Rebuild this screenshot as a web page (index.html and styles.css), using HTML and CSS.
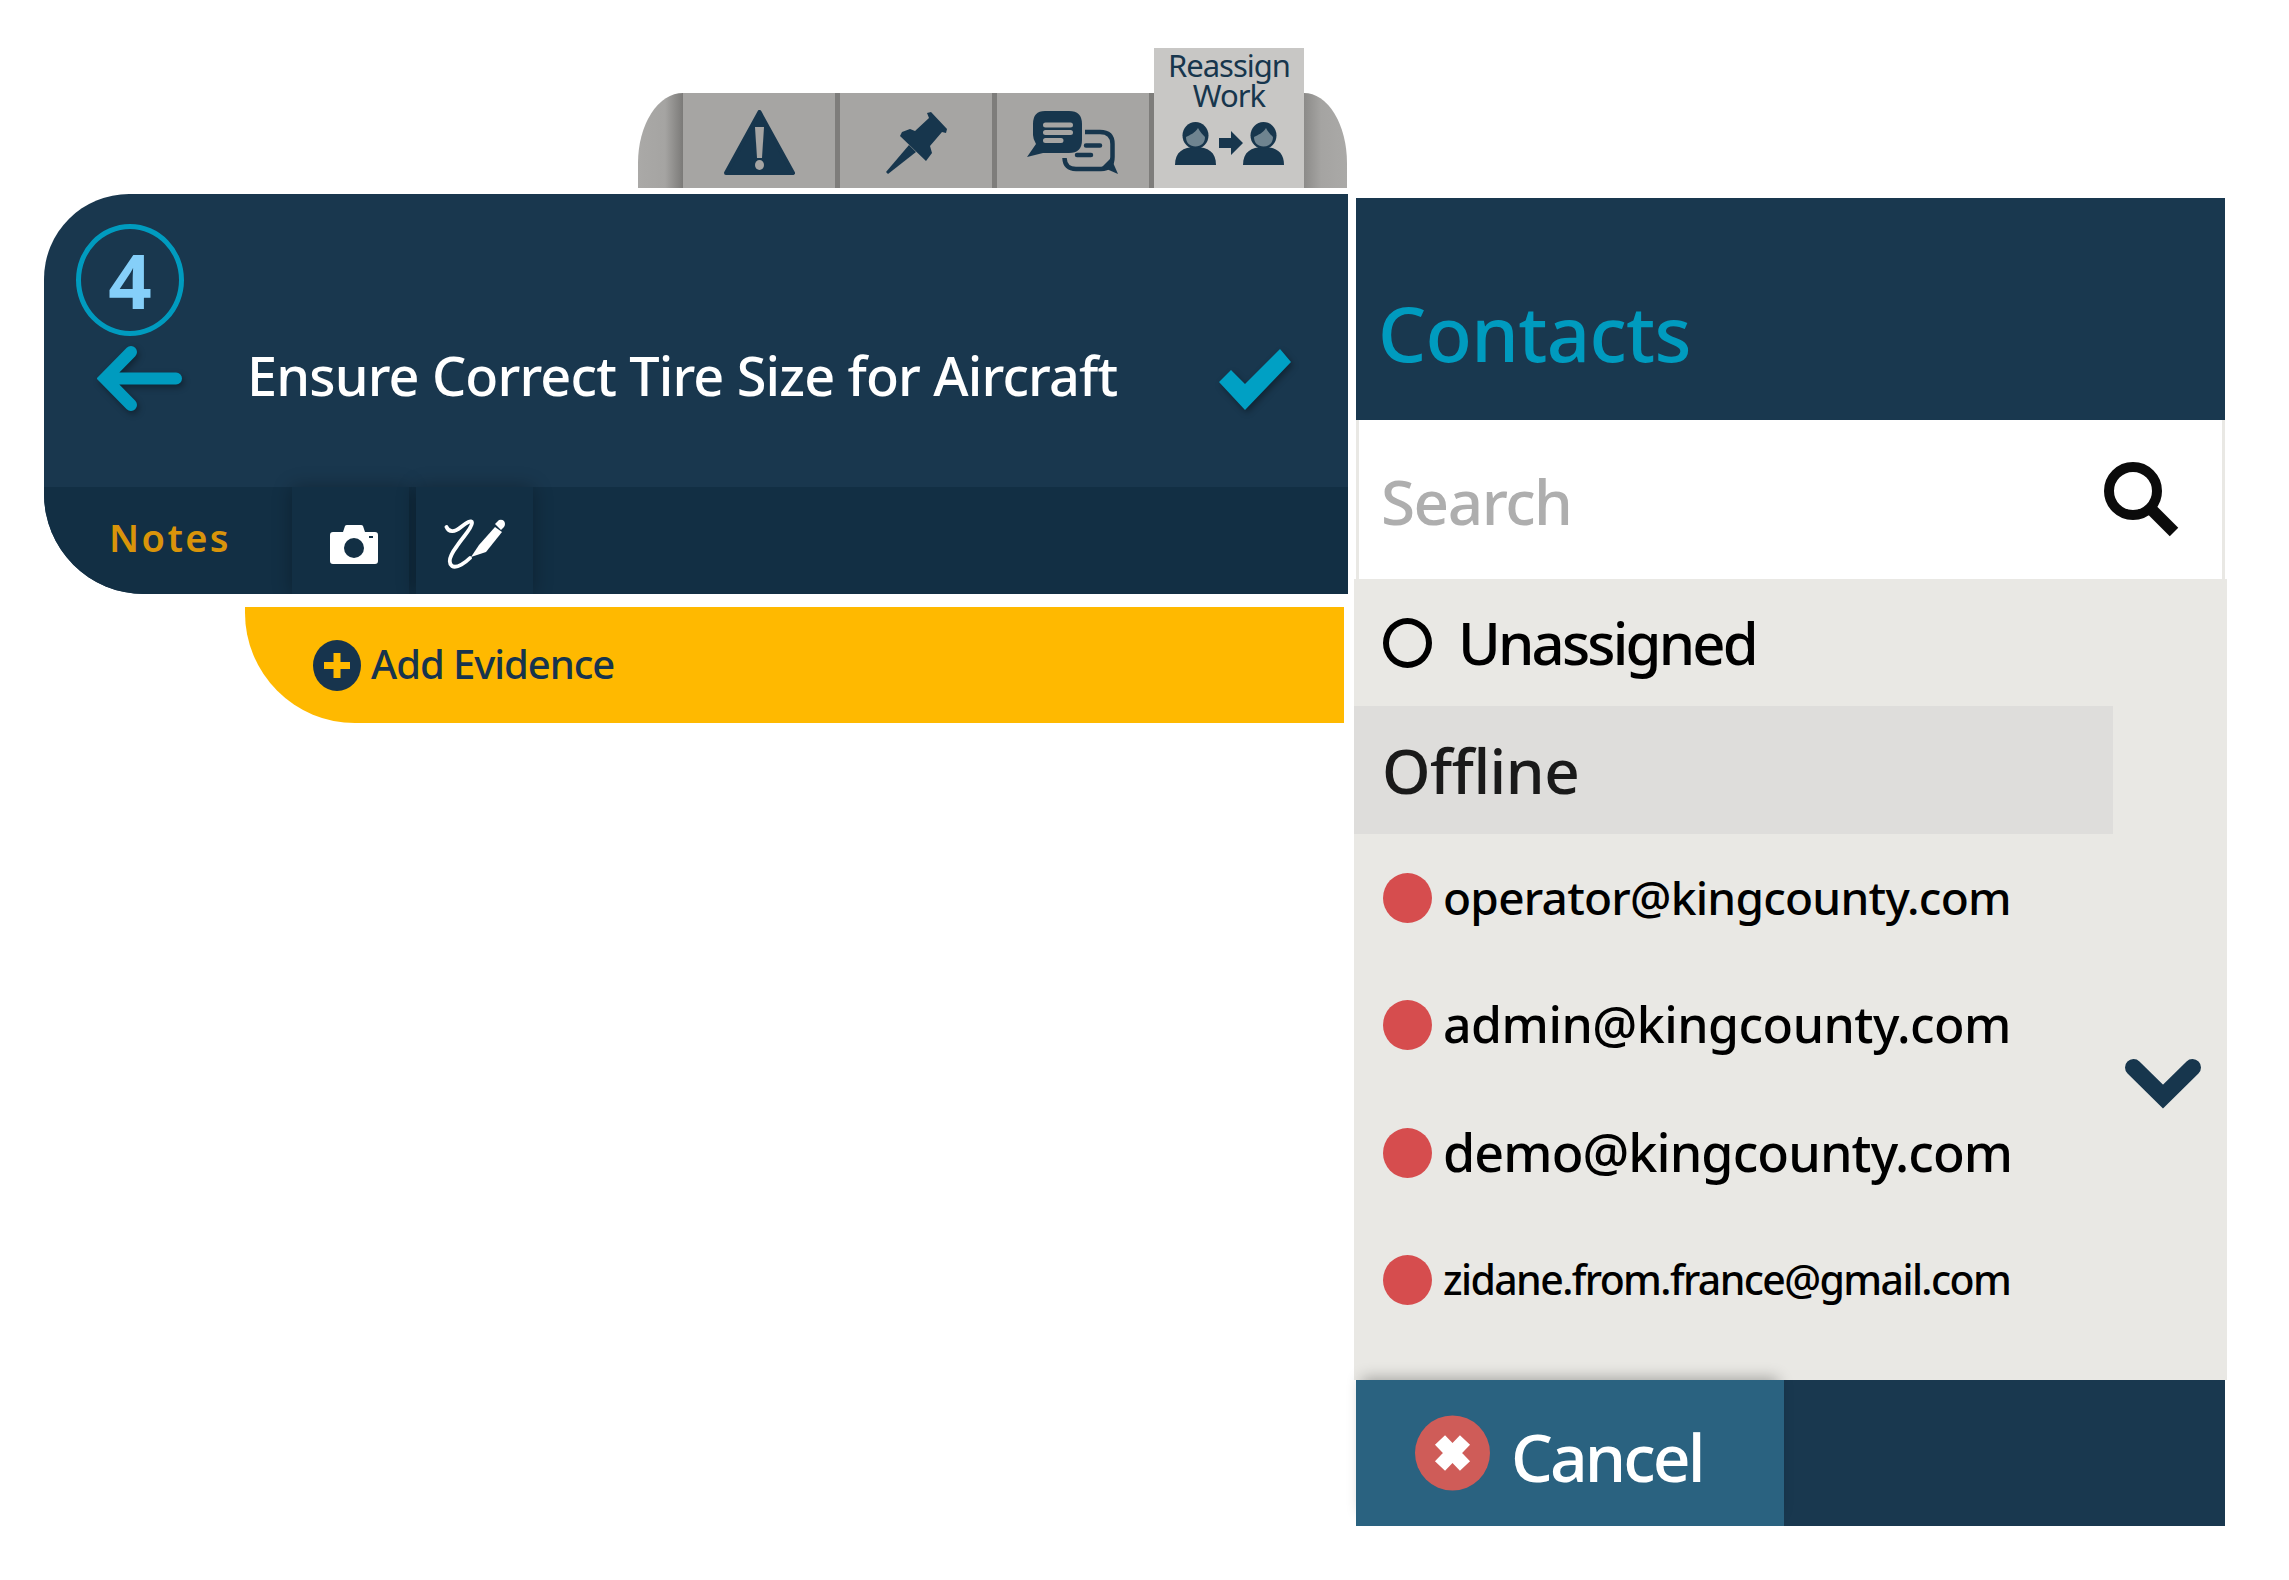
FILE: index.html
```html
<!DOCTYPE html>
<html lang="en">
<head>
<meta charset="utf-8">
<title>Reassign Work</title>
<link rel="stylesheet" href="styles.css">
</head>
<body>
<div class="page">
  <section class="left">
    <div class="tabs">
      <div class="cap cap-l"></div>
      <div class="tab">
        <svg class="ic-warn" viewBox="0 0 71 66"><path d="M35.5 2 L69 63 H2 Z" fill="#17364d" stroke="#17364d" stroke-width="4" stroke-linejoin="round"/><path d="M31 17 h9 l-2 31 h-5 Z" fill="#a6a5a3"/><ellipse cx="35.5" cy="55" rx="4.5" ry="5" fill="#a6a5a3"/></svg>
      </div>
      <div class="tab">
        <svg class="ic-pin" viewBox="0 0 61 62"><path d="M41 1 L45 0 L61 17 L60 21 L56 20 L44 34 L46 41 L40 49 L14 24 L16 20 L24 17 L29 19 L43 6 Z" fill="#17364d"/><path d="M23 33 L30 40 L2 62 L0 60 Z" fill="#17364d"/></svg>
      </div>
      <div class="tab">
        <svg class="ic-chat" viewBox="0 0 92 63"><path d="M58 21 H73 Q85.500 21 85.500 33 V46 Q85.500 58 74 58 H49 Q38 58 37.500 47" fill="none" stroke="#17364d" stroke-width="4.500"/><path d="M75 56 L91 63 L84 47 Z" fill="#17364d"/><path d="M59 34.500 H73 M50 44 H64" stroke="#17364d" stroke-width="4.500" stroke-linecap="round" fill="none"/><path d="M18 0 H42 Q55 0 55 13 V29 Q55 42 42 42 H16 L0 46 L9 33 Q6 28 6 24 V13 Q6 0 18 0 Z" fill="#17364d"/><path d="M18.500 14 H43.500 M18.500 21.500 H43.500 M18.500 29.500 H34" stroke="#a6a5a3" stroke-width="5" stroke-linecap="round" fill="none"/></svg>
      </div>
      <div class="tab tab-active">
        <div class="tab-label">Reassign<br>Work</div>
        <svg class="ic-people" viewBox="0 0 109 43"><path d="M0 43 C0 30 8 25 20.500 25 C33 25 41 30 41 43 Z" fill="#17364d"/><ellipse cx="20.500" cy="13.500" rx="13" ry="13.500" fill="#17364d"/><path d="M11 15 C15 13 20 11 23 6 C25 10 28 13 30 15 C30 21 26 24.500 20.500 24.500 C15 24.500 11 21 11 15 Z" fill="#6f8490"/><path d="M44 16 H56 V9 L68 21 L56 33 V26 H44 Z" fill="#17364d"/><path d="M68 43 C68 30 76 25 88.500 25 C101 25 109 30 109 43 Z" fill="#17364d"/><ellipse cx="88.500" cy="13.500" rx="13" ry="13.500" fill="#17364d"/><path d="M79 15 C83 13 88 11 91 6 C93 10 96 13 98 15 C98 21 94 24.500 88.500 24.500 C83 24.500 79 21 79 15 Z" fill="#6f8490"/></svg>
      </div>
      <div class="cap cap-r"></div>
    </div>

    <div class="task">
      <div class="task-head">
        <div class="step">4</div>
        <div class="title-row">
          <svg class="ic-back" viewBox="0 0 85 65"><path d="M79 32.500 H12 M34 6 L8 32.500 L34 59" fill="none" stroke="#009bbf" stroke-width="12" stroke-linecap="round" stroke-linejoin="miter"/></svg>
          <h1 class="title">Ensure Correct Tire Size for Aircraft</h1>
          <svg class="ic-check" viewBox="0 0 73 62"><path d="M0 34 L12 22 L26 36 L61 1 L72 14 L26 62 Z" fill="#00a0c4"/></svg>
        </div>
      </div>
      <div class="task-strip">
        <div class="strip-notes"><span class="notes-text">Notes</span></div>
        <div class="strip-cell">
          <svg class="ic-camera" viewBox="0 0 48 39"><path d="M3 7 H13 L15 1 Q15.500 0 17 0 H31 Q32.500 0 33 1 L35 7 H45 Q48 7 48 10 V36 Q48 39 45 39 H3 Q0 39 0 36 V10 Q0 7 3 7 Z" fill="#fff"/><circle cx="24" cy="23" r="10" fill="#122f44"/><rect x="39" y="11" width="4" height="2" fill="#122f44"/></svg>
        </div>
        <div class="strip-cell">
          <svg class="ic-sign" viewBox="0 0 61 50"><path d="M2.500 8 C5 14 11 13 17 8 C22 4 28 0 28 4 C28 9 19 18 13 27 C7 35 3 43 8 47 C13 50 22 43 26 39" fill="none" stroke="#fff" stroke-width="3.800" stroke-linecap="round"/><path d="M27 38 L35 26 L51 8 L58 13 L42 33 Z" fill="#fff"/><path d="M51 5 L55 1 Q58 0 60 2 Q62 5 60 8 L57 11 Z" fill="#fff"/></svg>
        </div>
      </div>
    </div>

    <div class="evidence">
      <svg class="ic-plus" viewBox="0 0 48 51"><ellipse cx="24" cy="25.500" rx="24" ry="25.500" fill="#17344d"/><path d="M24 13 V38 M11 25.500 H37" stroke="#ffb900" stroke-width="7"/></svg>
      <span class="evidence-text">Add Evidence</span>
    </div>
  </section>

  <section class="contacts">
    <header class="contacts-head"><h2 class="contacts-title">Contacts</h2></header>
    <div class="search">
      <span class="search-text">Search</span>
      <svg class="ic-search" viewBox="0 0 76 75"><circle cx="29" cy="29" r="24" fill="none" stroke="#0b0b0b" stroke-width="10"/><path d="M46 46 L70 70" stroke="#0b0b0b" stroke-width="12"/></svg>
    </div>
    <div class="list">
      <div class="rows">
        <div class="row row-unassigned"><span class="ring"></span><span class="unassigned-text">Unassigned</span></div>
        <div class="row row-offline"><span class="offline-text">Offline</span></div>
        <div class="row row-contact"><span class="dot"></span><span class="mail mail-operator">operator@kingcounty.com</span></div>
        <div class="row row-contact"><span class="dot"></span><span class="mail mail-admin">admin@kingcounty.com</span></div>
        <div class="row row-contact"><span class="dot"></span><span class="mail mail-demo">demo@kingcounty.com</span></div>
        <div class="row row-contact"><span class="dot"></span><span class="mail mail-zidane">zidane.from.france@gmail.com</span></div>
      </div>
      <svg class="ic-chevron" viewBox="0 0 76 50"><path d="M8.500 8.500 L38 37.500 L67.500 8.500" fill="none" stroke="#17364d" stroke-width="17" stroke-linecap="round"/></svg>
    </div>
    <footer class="contacts-foot">
      <button class="cancel">
        <svg class="ic-x" viewBox="0 0 75 76"><circle cx="37.500" cy="38" r="37.500" fill="#cf5c58"/><path d="M25 25 L50 51 M50 25 L25 51" stroke="#fff" stroke-width="14"/></svg>
        <span class="cancel-text">Cancel</span>
      </button>
    </footer>
  </section>
</div>
</body>
</html>
```
FILE: styles.css
```css
* { box-sizing: border-box; }
html, body { margin: 0; padding: 0; background: #fff; }
body { width: 2289px; height: 1580px; overflow: hidden; font-family: "Noto Sans", "Open Sans", sans-serif; }
h1, h2 { margin: 0; font-weight: 400; }

.page { display: flex; align-items: flex-start; gap: 6px; padding-left: 44px; }

/* left column */
.left { width: 1304px; padding-top: 48px; flex: none; }
.tabs { display: flex; align-items: flex-end; height: 140px; margin-left: 594px; }
.cap { height: 95px; width: 45px; flex: none; }
.cap-l { border-radius: 45px 0 0 0 / 70px 0 0 0; background: linear-gradient(90deg, #aaa9a7 0, #a5a4a2 60%, #7b7a78 100%); }
.cap-r { width: 43px; border-radius: 0 43px 0 0 / 0 70px 0 0; background: linear-gradient(90deg, #8c8b89 0, #a5a4a2 40%, #aaa9a7 100%); }
.tab { width: 152px; height: 95px; flex: none; background: #a6a5a3; margin-right: 5px; display: flex; align-items: flex-end; justify-content: center; box-shadow: 5px 0 0 #7e7d7b; }
.tab-active { width: 150px; height: 140px; margin: 0; background: #c8c7c5; flex-direction: column; align-items: center; justify-content: flex-start; box-shadow: none; }
.tab-label { margin-top: 2px; color: #17364d; font-size: 31px; line-height: 30px; letter-spacing: -1px; text-align: center; white-space: nowrap; }
.ic-warn { width: 71px; height: 66px; margin-bottom: 12px; }
.ic-pin { width: 61px; height: 62px; margin-bottom: 14px; }
.ic-chat { width: 92px; height: 63px; margin-bottom: 14px; }
.ic-people { width: 109px; height: 43px; margin-top: 12px; }

.task { margin-top: 6px; height: 400px; background: #19374e; border-radius: 85px 0 0 100px; overflow: hidden; display: flex; flex-direction: column; }
.task-head { height: 293px; padding-top: 30px; flex: none; }
.step { width: 108px; height: 112px; margin-left: 32px; border: 5px solid #009bbf; border-radius: 50%; display: flex; align-items: center; justify-content: center; color: #85cff9; font-size: 76px; font-weight: 700; line-height: 1; }
.title-row { display: flex; align-items: center; height: 65px; margin-top: 10px; padding-left: 53px; }
.ic-back { width: 85px; height: 65px; flex: none; filter: drop-shadow(2px 3px 3px rgba(0,0,0,.35)); }
.title { margin: -6px 0 0 65px; width: 872px; flex: none; font-size: 54px; font-weight: 500; letter-spacing: -.85px; color: #fff; white-space: nowrap; line-height: 65px; }
.ic-check { width: 73px; height: 62px; margin-left: 100px; flex: none; filter: drop-shadow(2px 3px 3px rgba(0,0,0,.35)); }

.task-strip { flex: 1; background: #122f44; display: flex; gap: 7px; }
.strip-notes { width: 241px; padding: 26px 0 0 65px; }
.notes-text { color: #d9940a; font-size: 38px; font-weight: 600; letter-spacing: 2.4px; line-height: 48px; display: inline-block; }
.strip-cell { width: 117px; background: #122f44; box-shadow: 0 0 18px rgba(0,0,0,.3); display: flex; align-items: flex-start; justify-content: center; }
.ic-camera { width: 48px; height: 39px; margin: 38px 0 0 6px; }
.ic-sign { width: 61px; height: 50px; margin-top: 32px; }

.evidence { margin-top: 13px; width: 1099px; margin-left: 201px; height: 116px; background: #ffb900; border-radius: 0 0 0 110px; display: flex; align-items: center; padding: 0 0 3px 68px; }
.ic-plus { width: 48px; height: 51px; flex: none; margin-top: 3px; }
.evidence-text { margin-left: 10px; color: #17344d; font-size: 40px; font-weight: 500; letter-spacing: -1.05px; white-space: nowrap; }

/* contacts */
.contacts { width: 873px; margin-top: 198px; flex: none; }
.contacts-head { height: 222px; margin: 0 2px; background: #19384f; padding: 85px 0 0 22px; }
.contacts-title { color: #009bbf; font-size: 76px; font-weight: 500; letter-spacing: -.7px; line-height: 100px; white-space: nowrap; }
.search { height: 159px; margin: 0 2px; background: #fff; border: 3px solid #e9e8e4; border-width: 0 3px; display: flex; align-items: center; justify-content: space-between; padding: 0 42px 0 22px; }
.search-text { color: #aeaeae; font-size: 62px; font-weight: 500; letter-spacing: -1.5px; margin-top: 3px; }
.ic-search { width: 76px; height: 75px; flex: none; }
.list { height: 801px; background: #e9e8e4; display: flex; align-items: flex-start; }
.rows { width: 759px; flex: none; }
.row { display: flex; align-items: center; padding-left: 29px; white-space: nowrap; }
.row-unassigned { height: 127px; }
.row-offline { height: 128px; background: #dedddb; padding-left: 28px; }
.row-contact { height: 127.5px; }
.ring { width: 49px; height: 50px; border: 6px solid #000; border-radius: 50%; flex: none; }
.unassigned-text { margin-left: 26px; font-size: 58px; font-weight: 500; letter-spacing: -2.8px; color: #000; }
.offline-text { font-size: 62px; font-weight: 500; letter-spacing: -.5px; color: #1a1a1a; }
.dot { width: 49px; height: 50px; background: #d64d4e; border-radius: 50%; flex: none; }
.mail { margin: -2px 0 0 11px; color: #000; font-weight: 500; }
.mail-operator { font-size: 46px; letter-spacing: -.75px; }
.mail-admin { font-size: 50px; letter-spacing: -.5px; }
.mail-demo { font-size: 52px; letter-spacing: -.9px; }
.mail-zidane { font-size: 41px; letter-spacing: -1.6px; }
.ic-chevron { width: 76px; height: 50px; margin: 480px 0 0 12px; flex: none; }
.contacts-foot { height: 146px; margin: 0 2px; background: #19384f; }
.cancel { width: 428px; height: 146px; border: 0; padding: 0 0 0 59px; background: #2a6280; display: flex; align-items: center; font-family: inherit; box-shadow: 0 -8px 14px -6px rgba(0,0,0,.3); }
.ic-x { width: 75px; height: 76px; flex: none; }
.cancel-text { margin: 5px 0 0 21px; font-size: 66px; font-weight: 500; letter-spacing: -2.9px; color: #fff; }
```
